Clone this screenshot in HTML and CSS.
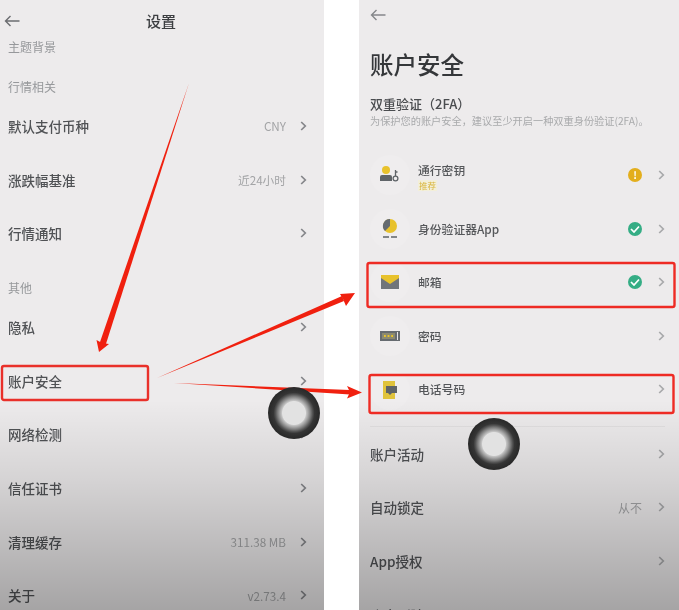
FILE: index.html
```html
<!DOCTYPE html>
<html lang="zh-CN">
<head>
    <meta charset="UTF-8">
    <meta name="viewport" content="width=device-width, initial-scale=1.0">
    <title>账户安全</title>
    <link rel="stylesheet" href="styles.css">
</head>
<body>

<svg width="0" height="0" class="defs">
    <symbol id="chev" viewBox="0 0 7 10">
        <path d="M1.200 1 L5.300 5 L1.200 9" fill="none" stroke="currentColor" stroke-width="1.7"/>
    </symbol>
    <symbol id="back" viewBox="0 0 16 12">
        <path d="M15.5 6 H1.5 M6.5 1 L1.5 6 L6.5 11" fill="none" stroke="currentColor" stroke-width="1.4"/>
    </symbol>
</svg>

<div class="screens">
    <!-- 设置 -->
    <section class="panel panel-left">
        <header class="topbar">
            <svg class="back"><use href="#back"/></svg>
            <span class="topbar-title">设置</span>
        </header>
        <div class="group-label first">主题背景</div>
        <div class="group-label second">行情相关</div>
        <div class="row"><span class="row-name">默认支付币种</span><span class="row-value">CNY</span><svg class="chev"><use href="#chev"/></svg></div>
        <div class="row"><span class="row-name">涨跌幅基准</span><span class="row-value">近24小时</span><svg class="chev"><use href="#chev"/></svg></div>
        <div class="row"><span class="row-name">行情通知</span><svg class="chev"><use href="#chev"/></svg></div>
        <div class="group-label other">其他</div>
        <div class="row"><span class="row-name">隐私</span><svg class="chev"><use href="#chev"/></svg></div>
        <div class="row"><span class="row-name">账户安全</span><svg class="chev"><use href="#chev"/></svg></div>
        <div class="row"><span class="row-name">网络检测</span><svg class="chev"><use href="#chev"/></svg></div>
        <div class="row"><span class="row-name">信任证书</span><svg class="chev"><use href="#chev"/></svg></div>
        <div class="row"><span class="row-name">清理缓存</span><span class="row-value">311.38 MB</span><svg class="chev"><use href="#chev"/></svg></div>
        <div class="row"><span class="row-name">关于</span><span class="row-value">v2.73.4</span><svg class="chev"><use href="#chev"/></svg></div>
    </section>

    <!-- 账户安全 -->
    <section class="panel panel-right">
        <svg class="back back-right"><use href="#back"/></svg>
        <h1>账户安全</h1>
        <h2>双重验证（2FA）</h2>
        <p class="hint">为保护您的账户安全，建议至少开启一种双重身份验证(2FA)。</p>

        <div class="row sec-row">
            <span class="sec-icon">
                <svg width="24" height="20" viewBox="0 0 24 20">
                    <circle cx="8" cy="5" r="4" fill="#e8c22c"/>
                    <path d="M2 12 q0-2 2-2 h8 q2 0 2 2 v4 h-12 z" fill="#5f6468"/>
                    <circle cx="17.5" cy="13.5" r="2.4" fill="none" stroke="#5f6468" stroke-width="1.3"/>
                    <path d="M17.5 11 V5 M17.5 7 h2" fill="none" stroke="#5f6468" stroke-width="1.3"/>
                </svg>
            </span>
            <span class="sec-name with-tag">通行密钥<em class="tag">推荐</em></span>
            <span class="status warn">!</span>
            <svg class="chev"><use href="#chev"/></svg>
        </div>
        <div class="row sec-row">
            <span class="sec-icon">
                <svg width="18" height="22" viewBox="0 0 18 22">
                    <circle cx="9" cy="8" r="7" fill="#e8c22c"/>
                    <path d="M9 1 A7 7 0 0 0 4 13 L9 8 Z" fill="#646a70"/>
                    <path d="M2 19 h6 M10 19 h6" stroke="#5f6468" stroke-width="1.4"/>
                </svg>
            </span>
            <span class="sec-name">身份验证器App</span>
            <span class="status ok"><svg width="10" height="8" viewBox="0 0 10 8"><path d="M1 4 L4 7 L9 1.5" fill="none" stroke="#fff" stroke-width="1.7"/></svg></span>
            <svg class="chev"><use href="#chev"/></svg>
        </div>
        <div class="row sec-row">
            <span class="sec-icon">
                <svg width="18" height="14" viewBox="0 0 18 14">
                    <rect width="18" height="14" fill="#70757a"/>
                    <path d="M0 0 H18 V3 L9 9 L0 3 Z" fill="#e8c22c"/>
                </svg>
            </span>
            <span class="sec-name">邮箱</span>
            <span class="status ok"><svg width="10" height="8" viewBox="0 0 10 8"><path d="M1 4 L4 7 L9 1.5" fill="none" stroke="#fff" stroke-width="1.7"/></svg></span>
            <svg class="chev"><use href="#chev"/></svg>
        </div>
        <div class="row sec-row">
            <span class="sec-icon">
                <svg width="20" height="10" viewBox="0 0 20 10">
                    <rect width="20" height="10" fill="#666b70"/>
                    <rect x="2" y="2" width="13" height="6" fill="#8c8a70"/>
                    <path d="M4 5 h1.8 M7.6 5 h1.8 M11.2 5 h1.8" stroke="#e8c22c" stroke-width="2"/>
                    <rect x="17" y="1" width="1" height="8" fill="#e8e6e7"/>
                </svg>
            </span>
            <span class="sec-name">密码</span>
            <svg class="chev"><use href="#chev"/></svg>
        </div>
        <div class="row sec-row last">
            <span class="sec-icon">
                <svg width="14" height="18" viewBox="0 0 14 18">
                    <rect width="12" height="18" fill="#e0c33c"/>
                    <rect x="3" y="5" width="11" height="7" fill="#5f6468"/>
                    <path d="M5 12 h4 l-2 2 z" fill="#5f6468"/>
                </svg>
            </span>
            <span class="sec-name">电话号码</span>
            <svg class="chev"><use href="#chev"/></svg>
        </div>

        <div class="row"><span class="row-name">账户活动</span><svg class="chev"><use href="#chev"/></svg></div>
        <div class="row"><span class="row-name">自动锁定</span><span class="row-value">从不</span><svg class="chev"><use href="#chev"/></svg></div>
        <div class="row"><span class="row-name">App授权</span><svg class="chev"><use href="#chev"/></svg></div>
        <div class="row"><span class="row-name">账户删除</span><svg class="chev"><use href="#chev"/></svg></div>
    </section>
</div>

<!-- 标注 -->
<svg class="marks" width="679" height="610" viewBox="0 0 679 610">
    <rect x="2" y="366" width="146" height="34" rx="2" fill="none" stroke="#e9302a" stroke-width="2.4"/>
    <rect x="367.500" y="263" width="307" height="44" rx="2" fill="none" stroke="#ee2b24" stroke-width="2.4"/>
    <rect x="369.500" y="375" width="304" height="38" rx="2" fill="none" stroke="#ee2b24" stroke-width="2.4"/>
    <path d="M189 83 L99 345 L105 347 Z" fill="#f0200f"/>
    <path d="M99 352 L96.500 340 L102 343 L109 344 Z" fill="#f0200f"/>
    <path d="M157 378 L342 296 L344 301 Z" fill="#f0200f"/>
    <path d="M355 293 L340 294 L343 299 L346 306 Z" fill="#f0200f"/>
    <path d="M174 383 L350 390 L350 394.500 Z" fill="#f0200f"/>
    <path d="M362 392.500 L347 386 L350 392 L347 398.500 Z" fill="#f0200f"/>
</svg>
<span class="touch touch-left"></span>
<span class="touch touch-right"></span>

</body>
</html>
```

FILE: styles.css
```css
/* Global */
html, body {
    height: 610px;
    overflow: hidden;
}

body {
    margin: 0;
    background-color: #fff;
    font-family: "Noto Sans CJK SC", "Noto Sans", sans-serif;
    color: #45474a;
}

.defs {
    position: absolute;
}

.screens {
    display: flex;
    justify-content: space-between;
    height: 610px;
    overflow: hidden;
}

.panel {
    position: relative;
    box-sizing: border-box;
    height: 610px;
    overflow: hidden;
    filter: blur(0.35px);
    background-color: #edebec;
}

/* dark fade over the bottom of each screen */
.panel::after {
    content: "";
    position: absolute;
    left: 0;
    right: 0;
    bottom: 0;
    height: 210px;
    background: linear-gradient(rgba(0, 0, 0, 0), rgba(0, 0, 0, 0.1) 80px, rgba(0, 0, 0, 0.3));
}

.panel-left {
    width: 324px;
    padding: 0 17px 0 8px;
}

.panel-right {
    width: 320px;
    padding: 0 14px 0 11px;
}

/* Top bar */
.topbar {
    position: relative;
    display: flex;
    justify-content: center;
    align-items: center;
    box-sizing: border-box;
    height: 44px;
    padding-bottom: 4px;
    margin-bottom: -6px;
}

.topbar-title {
    font-size: 15px;
    font-weight: 500;
    color: #3c3e41;
    margin-left: 7px;
}

.back {
    width: 16px;
    height: 12px;
    color: #6b6d70;
}

.topbar .back {
    position: absolute;
    left: -4px;
    top: 15px;
}

.back-right {
    display: block;
    margin-top: 9px;
    color: #85878a;
}

/* Lists */
.group-label {
    font-size: 12px;
    line-height: 18px;
    color: #96989b;
}

.group-label.second {
    margin-top: 22px;
    height: 21px;
}

.group-label.other {
    height: 21px;
    margin-top: 19px;
}

.row {
    display: flex;
    align-items: center;
    height: 53.7px;
}

.row-name {
    flex: 1;
    font-size: 13.500px;
    font-weight: 500;
    color: #505255;
}

.row-value {
    font-size: 11.700px;
    color: #a3a4a6;
    margin-right: 14px;
}

.panel-right .row-value {
    font-size: 12px;
    margin-right: 16px;
}

.chev {
    width: 7px;
    height: 10px;
    color: #85868a;
    flex: none;
}

.panel-right .chev {
    color: #a8a9ab;
}

/* Security section */
h1 {
    margin: 26px 0 0;
    font-size: 23.500px;
    line-height: 34px;
    font-weight: 500;
    color: #35373a;
}

h2 {
    margin: 14px 0 0;
    font-size: 13px;
    line-height: 18px;
    font-weight: 500;
    color: #4a4c4f;
}

.hint {
    margin: 1px 0 20px;
    font-size: 10.200px;
    line-height: 14px;
    color: #a9aaac;
    white-space: nowrap;
}

.sec-row.last {
    border-bottom: 1px solid #e2e0e1;
    height: 63px;
    align-items: flex-start;
}

.sec-row.last .sec-icon {
    margin-top: 7px;
}

.sec-row.last .sec-name {
    margin-top: 18px;
}

.sec-row.last .chev {
    margin-top: 21px;
}

.sec-icon {
    display: flex;
    justify-content: center;
    align-items: center;
    flex: none;
    width: 40px;
    height: 40px;
    margin-right: 8px;
    border-radius: 50%;
    background-color: #efedee;
}

.sec-name {
    flex: 1;
    font-size: 11.800px;
    font-weight: 500;
    line-height: 16px;
    color: #55575a;
}

.sec-name.with-tag {
    padding-top: 3px;
}

.tag {
    display: block;
    width: fit-content;
    margin-top: 2px;
    padding: 0 1px;
    font-size: 8.500px;
    line-height: 11px;
    font-style: normal;
    font-weight: 400;
    color: #d9b53c;
    background-color: #f3efd9;
}

.status {
    display: flex;
    justify-content: center;
    align-items: center;
    width: 14px;
    height: 14px;
    margin-right: 16px;
    border-radius: 50%;
    font-size: 10px;
    font-weight: 700;
    color: #fff;
}

.status.warn {
    background-color: #e3ae1c;
}

.status.ok {
    background-color: #35ad85;
}

/* Annotations */
.marks {
    position: absolute;
    left: 0;
    top: 0;
}

.touch {
    position: absolute;
    box-sizing: border-box;
    width: 52px;
    height: 52px;
    border-radius: 50%;
    background: radial-gradient(circle closest-side, #e2e2e2 0 11.5px, #c2c2c2 12.5px, #a0a0a0 14.5px, #7c7c7c 16.5px, #555 18.5px, #353535 20.5px, #2a2a2a 25px, #2a2a2a 26px);
}

.touch-left {
    left: 268px;
    top: 387px;
}

.touch-right {
    left: 468px;
    top: 418px;
}
```
